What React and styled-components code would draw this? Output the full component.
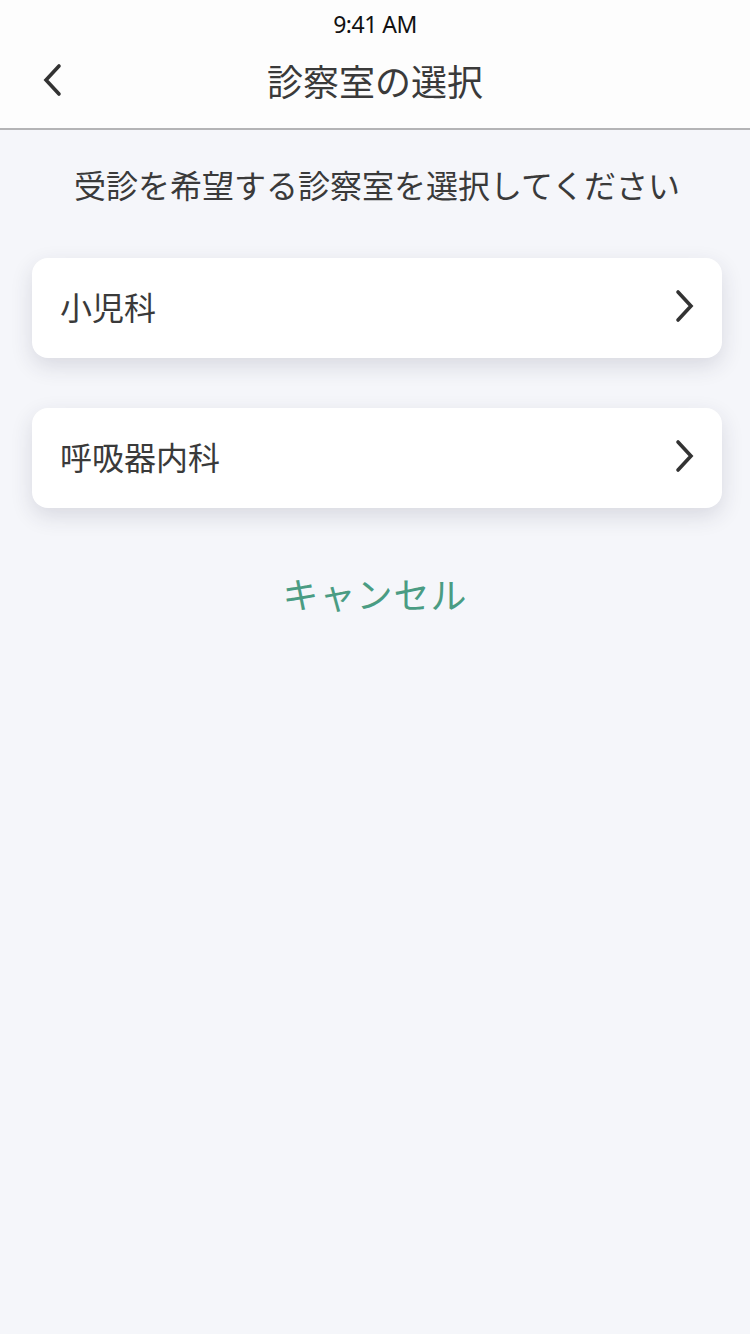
import React from "react";
import styled, { createGlobalStyle } from "styled-components";

const Global = createGlobalStyle`
  html, body { margin: 0; padding: 0; background: #f5f6fa; }
  body { font-family: "Noto Sans CJK JP", "Noto Sans", sans-serif; color: #333; }
  * { box-sizing: border-box; }
`;

const Page = styled.div`
  width: 750px;
  min-height: 1334px;
  background: #f5f6fa;
  display: flex;
  flex-direction: column;
`;

const Header = styled.header`
  background: #fdfdfd;
  border-bottom: 2px solid #b4b4b6;
  display: flex;
  flex-direction: column;
`;

const StatusBar = styled.div`
  height: 48px;
  display: flex;
  align-items: center;
  justify-content: center;
  font-family: "Noto Sans", sans-serif;
  font-size: 23px;
  letter-spacing: -0.5px;
  color: #111;
`;

const NavBar = styled.div`
  height: 80px;
  padding-bottom: 16px;
  display: grid;
  grid-template-columns: 100px 1fr 100px;
  align-items: center;
`;

const BackButton = styled.button`
  border: 0;
  background: none;
  padding: 0 0 0 41px;
  display: flex;
  align-items: center;
  height: 40px;
  cursor: pointer;
`;

const Title = styled.h1`
  margin: 0;
  text-align: center;
  font-size: 36px;
  font-weight: 400;
  color: #3a3a3a;
  line-height: 1;
`;

const Content = styled.main`
  display: flex;
  flex-direction: column;
  padding: 0 28px 0 32px;
`;

const Lead = styled.p`
  margin: 32px 0 0;
  text-align: center;
  font-size: 32px;
  line-height: 44px;
  color: #3a3a3a;
  white-space: nowrap;
`;

const List = styled.div`
  margin-top: 52px;
  display: flex;
  flex-direction: column;
  gap: 50px;
`;

const Card = styled.button`
  height: 100px;
  border: 0;
  border-radius: 16px;
  background: #fff;
  box-shadow: 0 8px 22px rgba(40, 45, 70, 0.14);
  display: flex;
  align-items: center;
  justify-content: space-between;
  padding: 0 26px 4px 28px;
  font-family: inherit;
  font-size: 32px;
  color: #3a3a3a;
  cursor: pointer;
`;

const Cancel = styled.button`
  margin-top: 58px;
  align-self: center;
  border: 0;
  background: none;
  font-family: inherit;
  font-size: 36px;
  color: #4a9c83;
  letter-spacing: 1px;
  cursor: pointer;
  margin-left: -4px;
`;

const Chevron = ({ dir = "right" }) => (
  <svg width="22" height="34" viewBox="0 0 22 34">
    {dir === "right" ? (
      <path d="M4 3 L17 17 L4 31" fill="none" stroke="#333" strokeWidth="3.6" strokeLinecap="round" strokeLinejoin="miter" />
    ) : (
      <path d="M18 3 L5 17 L18 31" fill="none" stroke="#333" strokeWidth="3.6" strokeLinecap="round" strokeLinejoin="miter" />
    )}
  </svg>
);

const rooms = ["小児科", "呼吸器内科"];

export default function App() {
  return (
    <Page>
      <Global />
      <Header>
        <StatusBar>9:41 AM</StatusBar>
        <NavBar>
          <BackButton aria-label="戻る"><Chevron dir="left" /></BackButton>
          <Title>診察室の選択</Title>
          <div />
        </NavBar>
      </Header>
      <Content>
        <Lead>受診を希望する診察室を選択してください</Lead>
        <List>
          {rooms.map((r) => (
            <Card key={r}>
              <span>{r}</span>
              <Chevron />
            </Card>
          ))}
        </List>
        <Cancel>キャンセル</Cancel>
      </Content>
    </Page>
  );
}
